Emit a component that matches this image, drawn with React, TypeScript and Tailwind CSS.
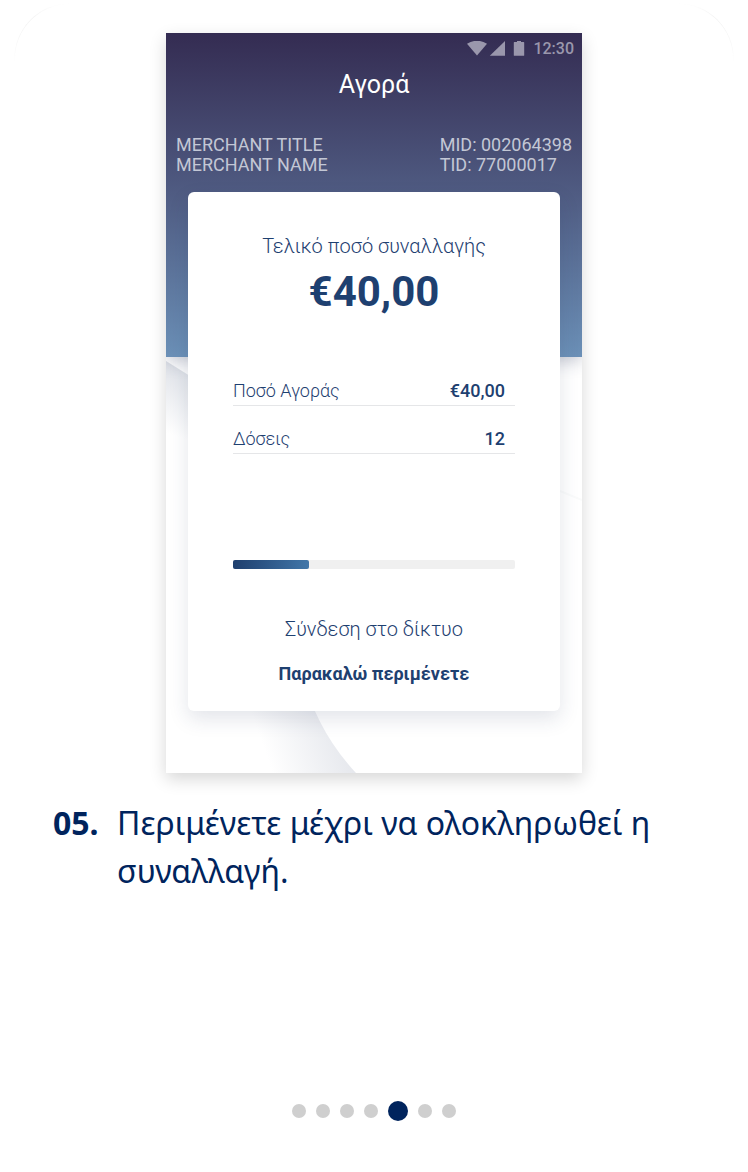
import React from "react";

const details = [
  { label: "Ποσό Αγοράς", value: "€40,00" },
  { label: "Δόσεις", value: "12" },
];

const slides = [1, 2, 3, 4, 5, 6, 7];
const activeSlide = 5;

function StatusBar() {
  return (
    <div className="flex h-8 items-center justify-end pr-2 text-[#9a97ac]">
      <svg className="h-4 w-[38px]" viewBox="0 0 38 16" fill="currentColor" aria-hidden="true">
        <path d="M0 2.8Q10-3.3 20 2.8L10 14.5Z" />
        <path d="M38 0V14.8H22.8Z" />
      </svg>
      <svg className="ml-2 h-4 w-3" viewBox="0 0 12 16" fill="currentColor" aria-hidden="true">
        <path d="M4 0h4v.9h2.6q.6 0 .6.6V14.2q0 .6-.6.6H1.4q-.6 0-.6-.6V1.5q0-.6.6-.6H4Z" />
      </svg>
      <span className="ml-2 text-base font-medium">12:30</span>
    </div>
  );
}

function Backdrop() {
  return (
    <svg
      className="absolute inset-0 h-full w-full"
      viewBox="0 0 416 740"
      preserveAspectRatio="none"
      aria-hidden="true"
    >
      <defs>
        <linearGradient id="upper" gradientUnits="userSpaceOnUse" x1="20" y1="335" x2="0" y2="400">
          <stop offset="0" stopColor="#dfe2e8" />
          <stop offset="1" stopColor="#ffffff" />
        </linearGradient>
        <linearGradient id="lower" gradientUnits="userSpaceOnUse" x1="172" y1="690" x2="98" y2="716">
          <stop offset="0" stopColor="#e6e8ed" />
          <stop offset="1" stopColor="#ffffff" />
        </linearGradient>
      </defs>
      <path d="M0 328L24 343V440H0Z" fill="url(#upper)" />
      <path d="M60 640H136Q150 697 190 740H60Z" fill="url(#lower)" />
      <path d="M394 458L416 467" stroke="#fafbfb" strokeWidth="2" />
    </svg>
  );
}

function PaymentScreen() {
  return (
    <div className="relative mx-auto w-full max-w-[416px] bg-white pb-[62px] font-[Roboto,sans-serif] shadow-[0_6px_16px_rgba(0,0,0,0.16)]">
      <div className="absolute inset-0 overflow-hidden">
        <Backdrop />
        <div className="absolute inset-x-0 top-0 h-[324px] bg-linear-to-b from-[#342c52] to-[#6b90b7] shadow-[0_4px_16px_rgba(40,50,85,0.28)]" />
      </div>
      <div className="relative">
        <StatusBar />
        <h1 className="pt-1 text-center text-[25px] leading-8 text-white">Αγορά</h1>
        <div className="mt-[34px] flex justify-between px-[10px] text-lg leading-5 text-[#c3c7d5]">
          <p>
            MERCHANT TITLE
            <br />
            MERCHANT NAME
          </p>
          <p>
            MID: 002064398
            <br />
            TID: 77000017
          </p>
        </div>
        <section className="mx-[22px] mt-[17px] rounded-md bg-white px-[45px] pt-10 pb-[25px] text-[#1e4070] shadow-[0_8px_20px_rgba(40,55,90,0.13)]">
          <p className="text-center text-xl leading-7 font-light">Τελικό ποσό συναλλαγής</p>
          <p className="mt-1 text-center text-[42px] leading-[56px] font-bold">€40,00</p>
          <dl className="mt-[38px]">
            {details.map((item) => (
              <div
                key={item.label}
                className="flex h-12 items-end justify-between border-b border-[#e5e6e8] pr-[10px] pb-[2px]"
              >
                <dt className="text-lg leading-6 font-light">{item.label}</dt>
                <dd className="text-lg leading-6 font-medium">{item.value}</dd>
              </div>
            ))}
          </dl>
          <div
            role="progressbar"
            aria-label="Σύνδεση στο δίκτυο"
            aria-valuenow={27}
            aria-valuemin={0}
            aria-valuemax={100}
            className="mt-[106px] h-[9px] rounded-xs bg-[#f0f0f0]"
          >
            <div className="h-full w-[27%] rounded-xs bg-linear-to-r from-[#1f3f6e] to-[#4277a9]" />
          </div>
          <p className="mt-[46px] text-center text-xl leading-7 font-light">Σύνδεση στο δίκτυο</p>
          <p className="mt-[19px] text-center text-lg leading-6 font-bold">Παρακαλώ περιμένετε</p>
        </section>
      </div>
    </div>
  );
}

export default function App() {
  return (
    <main className="relative flex min-h-screen flex-col bg-white px-4 pt-[33px] pb-[51px]">
      <div className="pointer-events-none absolute inset-x-[14px] top-[3px] h-[120px] rounded-t-[56px] border border-b-0 border-[#f3f3f3] mask-[linear-gradient(to_bottom,transparent,black_16px,transparent_60px)]" />
      <PaymentScreen />
      <div className="mt-[26px] flex px-[37px] font-['Noto_Sans',sans-serif] text-[32px] leading-[48px] text-[#00245d]">
        <span className="w-16 shrink-0 font-bold">05.</span>
        <p>Περιμένετε μέχρι να ολοκληρωθεί η συναλλαγή.</p>
      </div>
      <nav aria-label="Βήματα" className="mt-auto flex items-center justify-center gap-[10px]">
        {slides.map((slide) => (
          <button
            key={slide}
            type="button"
            aria-label={`Βήμα ${slide}`}
            aria-current={slide === activeSlide ? "step" : undefined}
            className={
              slide === activeSlide
                ? "size-5 rounded-full bg-[#00245d]"
                : "size-[14px] rounded-full bg-[#cfcfcf]"
            }
          />
        ))}
      </nav>
    </main>
  );
}
